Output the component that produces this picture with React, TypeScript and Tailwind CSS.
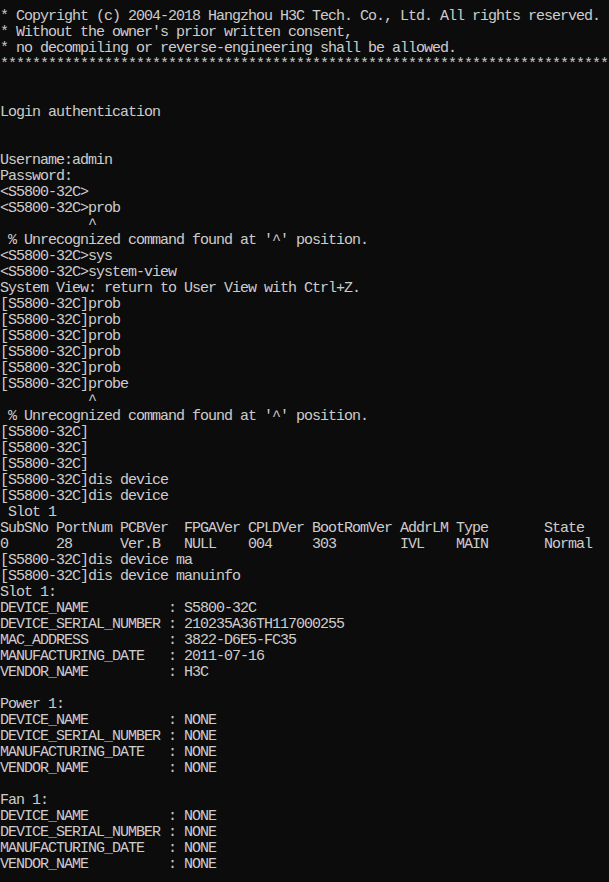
const stars = "*".repeat(80);

const lines: string[] = [
  stars,
  "* Copyright (c) 2004-2018 Hangzhou H3C Tech. Co., Ltd. All rights reserved.",
  "* Without the owner's prior written consent,",
  "* no decompiling or reverse-engineering shall be allowed.",
  stars,
  "",
  "",
  "Login authentication",
  "",
  "",
  "Username:admin",
  "Password:",
  "<S5800-32C>",
  "<S5800-32C>prob",
  "           ^",
  " % Unrecognized command found at '^' position.",
  "<S5800-32C>sys",
  "<S5800-32C>system-view",
  "System View: return to User View with Ctrl+Z.",
  "[S5800-32C]prob",
  "[S5800-32C]prob",
  "[S5800-32C]prob",
  "[S5800-32C]prob",
  "[S5800-32C]prob",
  "[S5800-32C]probe",
  "           ^",
  " % Unrecognized command found at '^' position.",
  "[S5800-32C]",
  "[S5800-32C]",
  "[S5800-32C]",
  "[S5800-32C]dis device",
  "[S5800-32C]dis device",
  " Slot 1",
  "SubSNo PortNum PCBVer  FPGAVer CPLDVer BootRomVer AddrLM Type       State",
  "0      28      Ver.B   NULL    004     303        IVL    MAIN       Normal",
  "[S5800-32C]dis device ma",
  "[S5800-32C]dis device manuinfo",
  "Slot 1:",
  "DEVICE_NAME          : S5800-32C",
  "DEVICE_SERIAL_NUMBER : 210235A36TH117000255",
  "MAC_ADDRESS          : 3822-D6E5-FC35",
  "MANUFACTURING_DATE   : 2011-07-16",
  "VENDOR_NAME          : H3C",
  "",
  "Power 1:",
  "DEVICE_NAME          : NONE",
  "DEVICE_SERIAL_NUMBER : NONE",
  "MANUFACTURING_DATE   : NONE",
  "VENDOR_NAME          : NONE",
  "",
  "Fan 1:",
  "DEVICE_NAME          : NONE",
  "DEVICE_SERIAL_NUMBER : NONE",
  "MANUFACTURING_DATE   : NONE",
  "VENDOR_NAME          : NONE",
  "",
];

export default function App() {
  return (
    <div className="h-[882px] w-[609px] overflow-hidden bg-[#0c0c0c] text-[#cccccc]">
      {/* first row is scrolled mostly out of view, like the console */}
      <div className="-mt-[7px] font-['Liberation_Mono',monospace] text-[15px] leading-[16px] tracking-[-1px]">
        {lines.map((line, i) => (
          <div key={i} className="h-4 whitespace-pre">
            {line}
          </div>
        ))}
      </div>
    </div>
  );
}
